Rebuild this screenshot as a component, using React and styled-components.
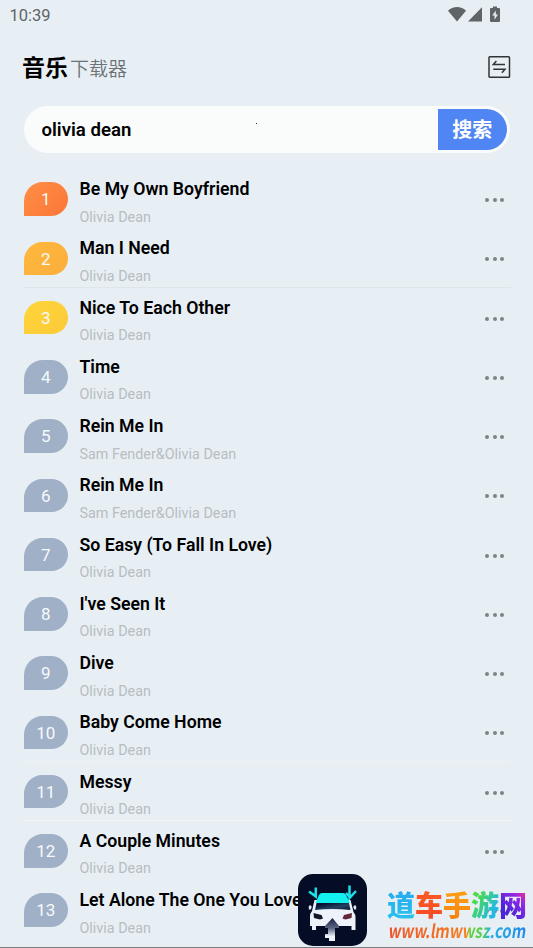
import { useState } from 'react'
import styled, { createGlobalStyle, css } from 'styled-components'

const GlobalStyle = createGlobalStyle`
  * {
    box-sizing: border-box;
  }

  body {
    margin: 0;
    background: #e7eff5;
    font-family: Roboto, 'Noto Sans CJK SC', sans-serif;
    overflow: hidden;
  }
`

const songs = [
  { title: 'Be My Own Boyfriend', artist: 'Olivia Dean' },
  { title: 'Man I Need', artist: 'Olivia Dean', line: '#dfe6e9' },
  { title: 'Nice To Each Other', artist: 'Olivia Dean' },
  { title: 'Time', artist: 'Olivia Dean' },
  { title: 'Rein Me In', artist: 'Sam Fender&Olivia Dean' },
  { title: 'Rein Me In', artist: 'Sam Fender&Olivia Dean' },
  { title: 'So Easy (To Fall In Love)', artist: 'Olivia Dean' },
  { title: "I've Seen It", artist: 'Olivia Dean' },
  { title: 'Dive', artist: 'Olivia Dean' },
  { title: 'Baby Come Home', artist: 'Olivia Dean', line: '#edf2f4' },
  { title: 'Messy', artist: 'Olivia Dean', line: '#f0f4f6' },
  { title: 'A Couple Minutes', artist: 'Olivia Dean' },
  { title: 'Let Alone The One You Love', artist: 'Olivia Dean' },
]

const rankColors = {
  1: 'linear-gradient(135deg, #ff8f45, #fb7637)',
  2: 'linear-gradient(135deg, #ffb83c, #faae3c)',
  3: 'linear-gradient(135deg, #ffd53a, #fbca38)',
}

const Screen = styled.div`
  position: relative;
  display: flex;
  flex-direction: column;
  width: 533px;
  height: 948px;
  overflow: hidden;
  background: #e7eff5;
  border-bottom: 1px solid #7b8084;
`

const StatusBar = styled.div`
  display: flex;
  flex: none;
  justify-content: space-between;
  align-items: center;
  height: 30px;
  padding: 0 31px 0 9.5px;
  color: #5f6466;
  font-size: 16.5px;
`

const Header = styled.header`
  display: flex;
  flex: none;
  justify-content: space-between;
  align-items: center;
  height: 75.5px;
  padding: 0 22px;
`

const Logo = styled.h1`
  display: flex;
  align-items: baseline;
  gap: 2px;
  margin: 0;
  padding-top: 4px;
  font-size: 23px;
  line-height: 34px;
  font-weight: 700;
  color: #000;

  small {
    font-size: 19px;
    font-weight: 350;
    color: #6b7174;
  }
`

const IconButton = styled.button`
  display: flex;
  padding: 0;
  border: 0;
  background: none;
`

const SearchBar = styled.form`
  display: flex;
  flex: none;
  height: 47.5px;
  margin: 0 23.5px 0 24px;
  padding: 3px;
  border-radius: 24px;
  background: #fafbfb;
`

const SearchInput = styled.input`
  flex: 1;
  min-width: 0;
  padding: 1px 0 0 14.5px;
  border: 0;
  outline: 0;
  background: none;
  color: #000;
  font: 600 18.6px Roboto, sans-serif;
`

const SearchButton = styled.button`
  width: 68.5px;
  padding: 0 0 1px;
  border: 0;
  border-radius: 0 21px 21px 0;
  background: #5086f3;
  color: #fff;
  font: 700 20px 'Noto Sans CJK SC', sans-serif;
`

const Speck = styled.i`
  position: absolute;
  left: 256px;
  top: 123px;
  width: 1px;
  height: 1px;
  background: #1c1c60;
`

const List = styled.ul`
  margin: 16px 22px 0 24px;
  padding: 0;
  list-style: none;
`

const Row = styled.li`
  display: flex;
  align-items: center;
  height: 59.25px;
  border-bottom: 1px solid ${p => p.$line || 'transparent'};
`

const Rank = styled.span`
  flex: none;
  width: 43.5px;
  height: 33.5px;
  margin-top: 2px;
  border-radius: 19px 17px 17px 0;
  background: ${p => rankColors[p.$rank] || '#9fb0c7'};
  color: #f7fafc;
  font-size: 17px;
  line-height: 35px;
  text-align: center;
`

const Song = styled.div`
  flex: 1;
  min-width: 0;
  padding: 8.6px 0 0 12px;
  white-space: nowrap;
`

const Title = styled.div`
  color: #000;
  font-size: 17.7px;
  font-weight: 600;
  line-height: 24px;
`

const Artist = styled.div`
  margin-top: 6.4px;
  color: #b7bdc0;
  font-size: 14.35px;
  line-height: 20px;
`

const More = styled.button`
  display: flex;
  gap: 3.5px;
  padding: 4px 7px 0 0;
  border: 0;
  background: none;

  i {
    width: 4px;
    height: 4px;
    border-radius: 50%;
    background: #7b8385;
  }
`

const AppBadge = styled.svg`
  position: absolute;
  left: 298px;
  top: 874px;
`

const SiteMark = styled.div`
  position: absolute;
  left: 387px;
  top: 886px;
  width: 144px;
`

const gradientText = css`
  background: ${p => p.$fill};
  -webkit-background-clip: text;
  background-clip: text;
  color: transparent;
`

const SiteName = styled.div`
  display: flex;
  font: 900 28px/36px 'Noto Sans CJK SC', sans-serif;
`

const Glyph = styled.span`
  width: 28px;
  ${gradientText}
`

const SiteUrl = styled.div`
  width: max-content;
  margin: -4px 0 0 2px;
  font: 700 18.6px/24px 'Noto Sans CJK SC', sans-serif;
  white-space: nowrap;
  transform: scaleX(0.8) skewX(-11deg);
  transform-origin: 0 50%;
  ${gradientText}
`

const siteName = [
  ['道', 'linear-gradient(#27a5ee, #29c4ee)'],
  ['车', 'linear-gradient(#ff5b25, #f34a24)'],
  ['手', 'linear-gradient(#ffa312, #f58112)'],
  ['游', 'linear-gradient(120deg, #4bdc45 25%, #22b9e5 75%)'],
  ['网', 'linear-gradient(45deg, #4b25d8 30%, #8f28e6 65%, #e02c9c 85%)'],
]

const StatusIcons = () => (
  <svg width='54' height='18' viewBox='0 0 54 18' fill='#5f6466'>
    <path d='M0 4.7C5-.1 13-.1 18 4.7L9 15.4z' />
    <path d='M20 15.5 34 1.2v14.3z' />
    <path d='M43 2h2V.5h4V2h2q1 0 1 1v12q0 1-1 1h-8q-1 0-1-1V3q0-1 1-1z' />
    <path d='m47.8 4.4-3.5 5.2h2.2v4.1l3.5-5.3h-2.2z' fill='#e7eff5' />
  </svg>
)

const SwitchIcon = () => (
  <svg width='23' height='23' viewBox='0 0 23 23' fill='none' stroke='#303437' strokeWidth='1.5'>
    <rect x='1' y='.8' width='20.5' height='20.5' rx='.8' />
    <path d='M17 8.5H5.3L8.4 5M5.3 13.2H17l-3.1 3.6' />
  </svg>
)

const CarBadge = () => (
  <AppBadge width='70' height='73' viewBox='0 0 70 73'>
    <defs>
      <linearGradient id='glass' x2='1' y2='1'>
        <stop offset='.2' stopColor='#071430' />
        <stop offset='.6' stopColor='#244263' />
        <stop offset='1' stopColor='#081735' />
      </linearGradient>
      <linearGradient id='arrow' x2='0' y2='1'>
        <stop stopColor='#172044' />
        <stop offset='.45' stopColor='#606785' />
        <stop offset='.8' stopColor='#eef2fb' />
      </linearGradient>
    </defs>
    <rect width='69' height='72' rx='15' fill='#050c25' />
    <path d='M16.5 26h36l3 12q2 2 2 6v12h-4v-4H18v4h-4v-4h-2V43q0-4 2-6z' fill='#eef3fb' />
    <path d='M10.8 32q2-2 3 1l-1 2.5h-2zM58.2 32q-2-2-3 1l1 2.5h2z' fill='#dce6f2' />
    <path d='M24 19h21q2 0 3 2l4 8H17.5l3.5-8q1-2 3-2z' fill='#12f0ef' />
    <path d='M18.5 29h32.5l1.5 7q-18-2-35.5 0z' fill='url(#glass)' />
    <path d='m15.5 39 8 2 1.5 3.5-3 1-6-1.5z' fill='#101729' />
    <path d='m54 39-8 2-1.5 3.5 3 1 6-1.5z' fill='#652839' />
    <path d='M34.5 44 41 52v2h-4v13h-6v-3h-4v-4h3v-6h-3v-2z' fill='url(#arrow)' />
    <path d='M11 17.5 17.8 22.5V13.5M17 22l-2-2M51.5 11.5V24l6.5-7M51.5 23l-3.5-4' fill='none' stroke='#18dfe8' strokeWidth='2.5' />
  </AppBadge>
)

const App = () => {
  const [query, setQuery] = useState('olivia dean')

  return (
    <Screen>
      <GlobalStyle />

      <StatusBar>
        <span>10:39</span>
        <StatusIcons />
      </StatusBar>

      <Header>
        <Logo>
          音乐<small>下载器</small>
        </Logo>
        <IconButton>
          <SwitchIcon />
        </IconButton>
      </Header>

      <SearchBar onSubmit={e => e.preventDefault()}>
        <SearchInput value={query} onChange={e => setQuery(e.target.value)} />
        <SearchButton>搜索</SearchButton>
      </SearchBar>
      <Speck />

      <List>
        {songs.map((song, i) => (
          <Row key={i} $line={song.line}>
            <Rank $rank={i + 1}>{i + 1}</Rank>
            <Song>
              <Title>{song.title}</Title>
              <Artist>{song.artist}</Artist>
            </Song>
            <More>
              <i />
              <i />
              <i />
            </More>
          </Row>
        ))}
      </List>

      <CarBadge />
      <SiteMark>
        <SiteName>
          {siteName.map(([char, fill]) => (
            <Glyph key={char} $fill={fill}>
              {char}
            </Glyph>
          ))}
        </SiteName>
        <SiteUrl $fill='linear-gradient(90deg, #ed5429, #f47b21 54%, #f58a1e 57%, #63cf3d 59%, #55cf50 69%, #29b4e0 73%, #2487e8)'>
          www.lmwwsz.com
        </SiteUrl>
      </SiteMark>
    </Screen>
  )
}

export default App
